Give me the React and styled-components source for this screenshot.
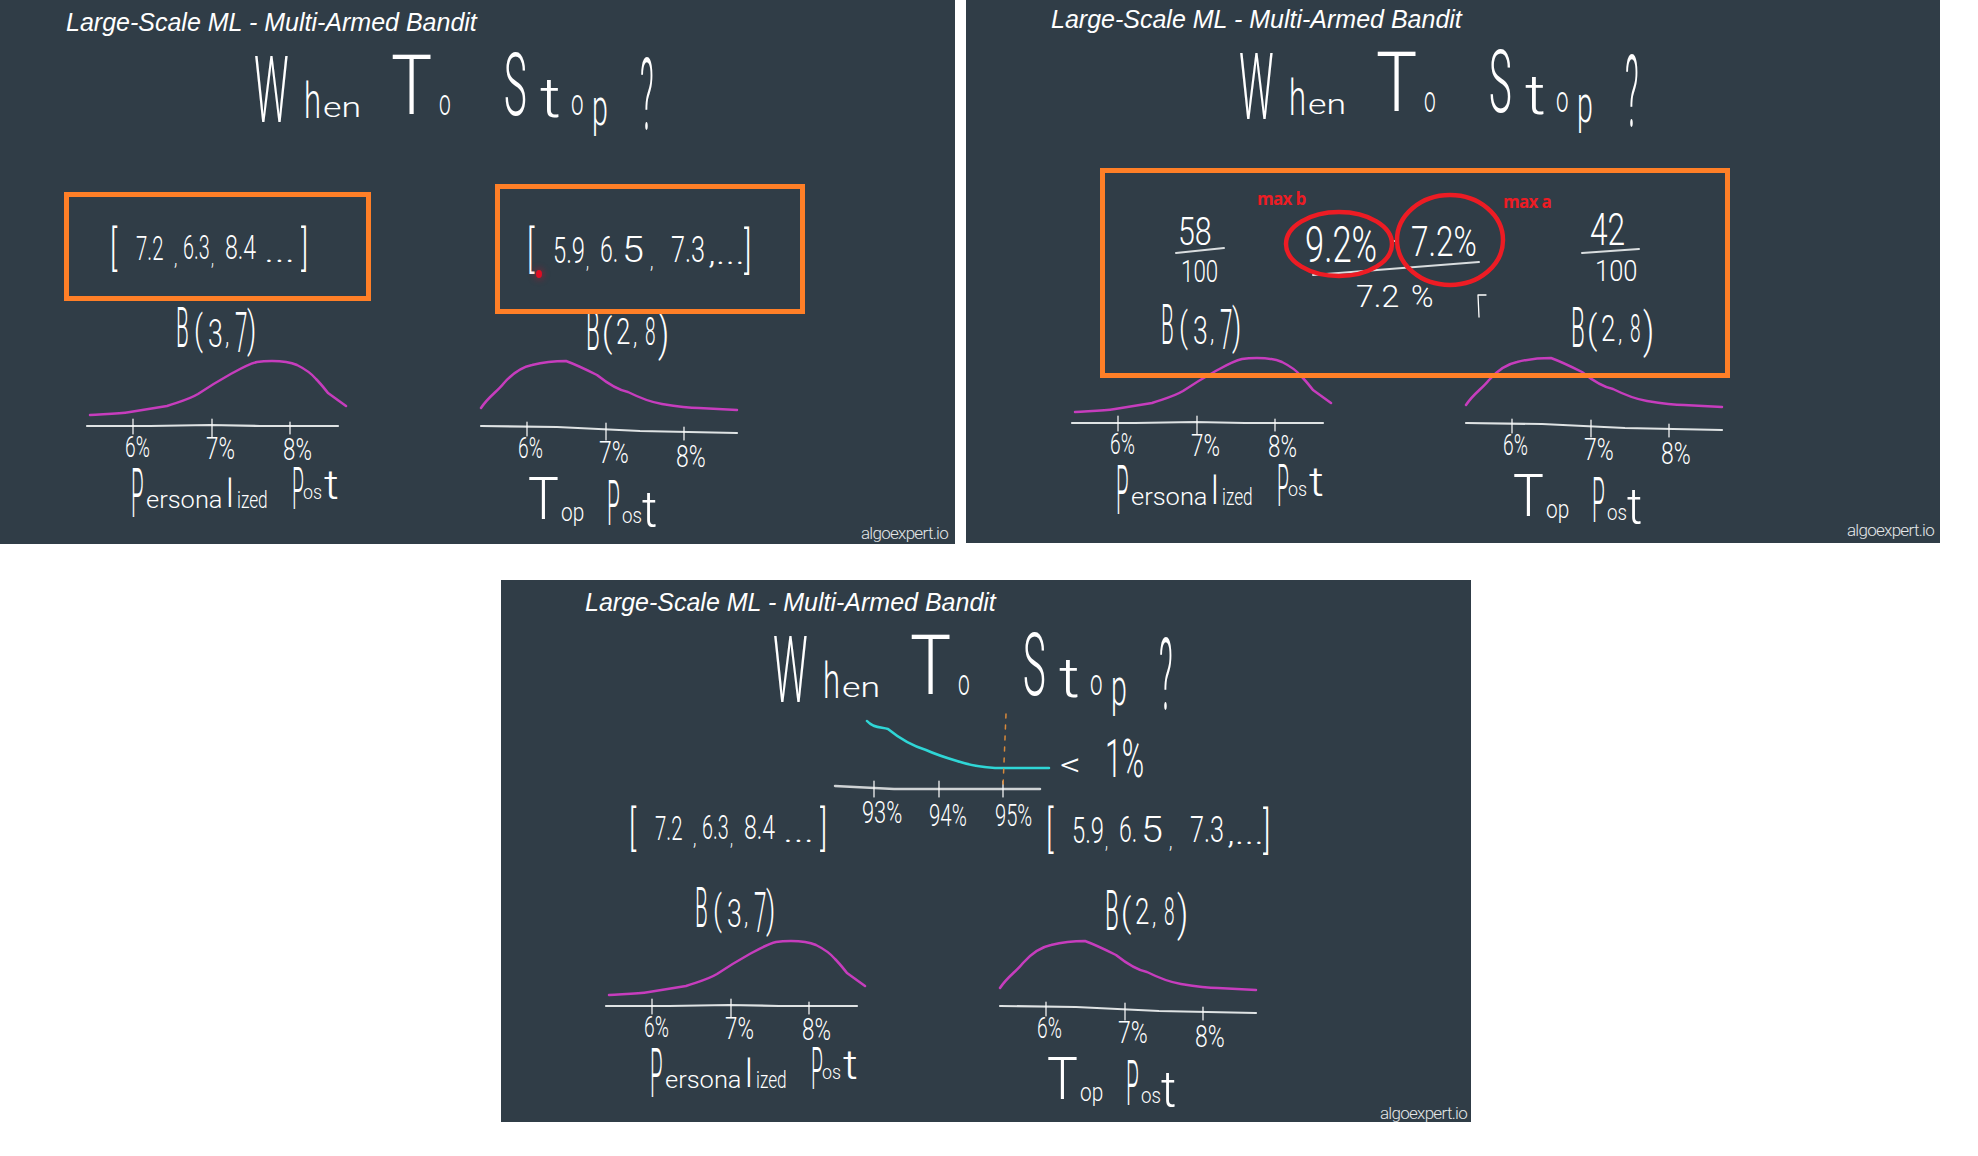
import React from 'react';
import styled, { createGlobalStyle } from 'styled-components';

const GlobalStyle = createGlobalStyle`
  html, body {
    margin: 0;
    padding: 0;
    background: #fff;
  }
`;

const Page = styled.div`
  width: 1978px;
  height: 1156px;
  display: flex;
  flex-direction: column;
  gap: 36px;
  overflow: hidden;
`;

const TopRow = styled.div`
  display: flex;
  gap: 11px;
`;

const BottomRow = styled.div`
  display: flex;
  padding-left: 501px;
`;

const Slide = styled.section`
  position: relative;
  flex: none;
  box-sizing: border-box;
  display: flex;
  flex-direction: column;
  justify-content: space-between;
  width: ${p => p.$w}px;
  height: ${p => p.$h}px;
  padding: ${p => p.$pad};
  background: #303d47;
  overflow: hidden;
`;

const Heading = styled.h2`
  margin: 0;
  font: italic 400 25px/26px 'Liberation Sans', Arial, sans-serif;
  white-space: nowrap;
  color: #fff;
`;

const Watermark = styled.span`
  align-self: flex-end;
  font: 300 17px/18px Roboto, sans-serif;
  letter-spacing: -0.7px;
  color: #e3e6e8;
`;

// the handwriting is a free drawing, placed in the coordinates of the first slide
const Canvas = styled.div`
  position: absolute;
  left: ${p => p.$dx || 0}px;
  top: ${p => p.$dy || 0}px;
  width: 1000px;
  height: 600px;
`;

const Ink = styled.span`
  position: absolute;
  left: ${p => p.$x}px;
  top: ${p => p.$base - 0.842 * p.$size}px;
  font-family: Roboto, 'Liberation Sans', sans-serif;
  font-size: ${p => p.$size}px;
  font-weight: 300;
  line-height: 1;
  white-space: pre;
  color: #fff;
  transform-origin: 0 84%;
  transform: scaleX(${p => p.$sx});
`;

const Note = styled.span`
  position: absolute;
  left: ${p => p.$x}px;
  top: ${p => p.$y}px;
  font: 700 17px/18px 'Open Sans', sans-serif;
  letter-spacing: -0.7px;
  color: #ed1c24;
`;

const Frame = styled.div`
  position: absolute;
  box-sizing: border-box;
  left: ${p => p.$x}px;
  top: ${p => p.$y}px;
  width: ${p => p.$w}px;
  height: ${p => p.$h}px;
  border: 5px solid #ff7f27;
`;

const Pointer = styled.i`
  position: absolute;
  left: ${p => p.$x - 3}px;
  top: ${p => p.$y - 4}px;
  width: 6px;
  height: 8px;
  border-radius: 50%;
  background: #e00d24;
  box-shadow: 0 0 6px 2px rgba(224, 13, 36, 0.35);
`;

const Sketch = styled.svg`
  position: absolute;
  left: 0;
  top: 0;
  width: 1000px;
  height: 600px;
  overflow: visible;
  fill: none;
  stroke-linecap: round;
  stroke-linejoin: round;
`;

const Marks = ({ items }) =>
  items.map(([x, base, size, sx, text], i) => (
    <Ink key={i} $x={x} $base={base} $size={size} $sx={sx}>
      {text}
    </Ink>
  ));

const TITLE = [
  [254, 122, 92, 0.42, 'W'],
  [304, 118, 50, 0.62, 'h'],
  [323, 118, 27, 1.32, 'en'],
  [391, 115, 84, 0.82, 'T'],
  [439, 115, 36, 0.58, 'o'],
  [504, 115, 87, 0.44, 'S'],
  [540, 117, 56, 1.15, 't'],
  [571, 115, 36, 0.62, 'o'],
  [592, 126, 52, 0.55, 'p'],
  [640, 130, 100, 0.3, '?'],
];

const LEFT_LABELS = [
  [176, 347, 56, 0.37, 'B'],
  [194, 345, 40, 0.7, '('],
  [208, 347, 38, 0.7, '3'],
  [225, 346, 28, 0.8, ','],
  [235, 352, 56, 0.4, '7'],
  [247, 346, 48, 0.6, ')'],
  [125, 457, 30, 0.64, '6%'],
  [206, 459, 31, 0.72, '7%'],
  [283, 460, 31, 0.72, '8%'],
  [131, 517, 68, 0.3, 'P'],
  [146, 508, 24, 1.06, 'ersona'],
  [226, 507, 38, 0.9, 'l'],
  [237, 508, 24, 0.72, 'ized'],
  [292, 510, 60, 0.32, 'P'],
  [303, 500, 21, 0.85, 'os'],
  [324, 500, 40, 1.15, 't'],
];

const RIGHT_LABELS = [
  [586, 350, 56, 0.4, 'B'],
  [602, 346, 38, 0.85, '('],
  [616, 344, 36, 0.72, '2'],
  [633, 346, 28, 0.8, ','],
  [645, 345, 38, 0.5, '8'],
  [658, 350, 48, 0.72, ')'],
  [518, 458, 30, 0.64, '6%'],
  [599, 463, 31, 0.74, '7%'],
  [676, 467, 31, 0.74, '8%'],
  [528, 520, 60, 0.86, 'T'],
  [561, 521, 26, 0.8, 'op'],
  [607, 525, 63, 0.33, 'P'],
  [622, 524, 22, 0.85, 'os'],
  [642, 527, 50, 0.95, 't'],
];

const ARRAYS = [
  [110, 265, 48, 0.62, '['],
  [136, 260, 34, 0.6, '7.2'],
  [174, 266, 22, 0.8, ','],
  [183, 259, 34, 0.58, '6.3'],
  [211, 266, 22, 0.7, ','],
  [225, 259, 34, 0.68, '8.4'],
  [264, 262, 30, 1.45, '...'],
  [301, 265, 48, 0.62, ']'],
  [527, 266, 50, 0.62, '['],
  [553, 263, 36, 0.66, '5.9'],
  [586, 269, 22, 0.7, ','],
  [600, 262, 36, 0.64, '6.'],
  [622, 262, 36, 1.1, '5'],
  [650, 269, 22, 0.8, ','],
  [671, 262, 36, 0.7, '7.3'],
  [708, 264, 30, 1.35, ',...'],
  [744, 267, 50, 0.62, ']'],
];

const SecondSlideMarks = [
  [212, 245, 38, 0.8, '58'],
  [215, 282, 31, 0.72, '100'],
  [624, 245, 44, 0.72, '42'],
  [629, 281, 30, 0.85, '100'],
  [339, 262, 50, 0.69, '9.2%'],
  [445, 256, 42, 0.75, '7.2%'],
  [390, 307, 32, 1, '7.2'],
  [445, 307, 32, 0.95, '%'],
];

const ThirdSlideMarks = [
  [361, 243, 32, 0.68, '93%'],
  [428, 246, 32, 0.64, '94%'],
  [494, 246, 32, 0.63, '95%'],
  [559, 196, 34, 1.2, '<'],
  [604, 197, 54, 0.56, '1%'],
];

// beta curves and their axes, same on every slide
const Curves = () => (
  <Sketch>
    <g stroke="#c63dbd" strokeWidth="2.5">
      <path d="M90 415 C105 414 118 414 130 412 C142 410 155 408 167 406 C178 402 188 400 198 394 C210 386 220 380 229 375 C240 369 248 364 257 362 C263 361 268 361 272 361 C282 361 290 362 297 365 C305 369 311 373 316 379 C321 384 324 388 328 393 L346 406" />
      <path d="M481 408 C489 396 497 392 504 383 C512 374 522 367 532 365 C544 362 555 361 566 361 C577 365 587 370 597 375 C607 383 618 390 628 392 C640 398 650 402 662 404 C674 406 686 408 699 408 L737 410" />
    </g>
    <g stroke="#dfe3e4" strokeWidth="2.2">
      <path d="M87 426 L150 426 L210 425 L260 426 L338 426" />
      <path d="M481 426 L557 427 L640 431 L737 433" />
    </g>
    <g stroke="#fff" strokeWidth="1.2">
      <path d="M133 419 V434 M212 419 V437 M290 422 V434" />
      <path d="M527 422 V436 M606 423 V440 M684 427 V440" />
    </g>
  </Sketch>
);

const Board = ({ children, dx, dy }) => (
  <Canvas $dx={dx} $dy={dy}>
    <Curves />
    <Marks items={TITLE} />
    <Marks items={LEFT_LABELS} />
    <Marks items={RIGHT_LABELS} />
    {children}
  </Canvas>
);

const App = () => (
  <>
    <GlobalStyle />
    <Page>
      <TopRow>
        <Slide $w={955} $h={544} $pad="9px 7px 2px 66px">
          <Heading>Large-Scale ML - Multi-Armed Bandit</Heading>
          <Watermark>algoexpert.io</Watermark>
          <Board>
            <Marks items={ARRAYS} />
            <Frame $x={64} $y={192} $w={307} $h={109} />
            <Frame $x={495} $y={184} $w={310} $h={130} />
            <Pointer $x={539} $y={274} />
          </Board>
        </Slide>
        <Slide $w={974} $h={543} $pad="6px 6px 4px 85px">
          <Heading>Large-Scale ML - Multi-Armed Bandit</Heading>
          <Watermark>algoexpert.io</Watermark>
          <Board dx={19} dy={-3} />
          <Canvas>
            <Sketch>
              <path d="M210 253 L258 248 M616 253 L673 249 M347 275 L513 262" stroke="#d9dddf" strokeWidth="2" />
              <path d="M426 241 H432 M513 317 L512 295 L520 295" stroke="#fff" strokeWidth="1.3" />
              <ellipse cx="373" cy="244" rx="53" ry="32" stroke="#ed1c24" strokeWidth="4.5" />
              <ellipse cx="484" cy="240" rx="53" ry="45" stroke="#ed1c24" strokeWidth="4.5" />
            </Sketch>
            <Marks items={SecondSlideMarks} />
            <Note $x={291} $y={190}>max b</Note>
            <Note $x={537} $y={193}>max a</Note>
            <Frame $x={134} $y={168} $w={630} $h={210} />
          </Canvas>
        </Slide>
      </TopRow>
      <BottomRow>
        <Slide $w={970} $h={542} $pad="9px 4px 0 84px">
          <Heading>Large-Scale ML - Multi-Armed Bandit</Heading>
          <Watermark>algoexpert.io</Watermark>
          <Board dx={18}>
            <Marks items={ARRAYS} />
          </Board>
          <Canvas>
            <Sketch>
              <path d="M366 141 C372 148 380 147 387 149 C398 158 412 166 425 170 C436 175 446 178 456 181 C468 185 480 187 494 188 L548 188" stroke="#2fd6d6" strokeWidth="2.5" />
              <path d="M334 206 L393 209 L539 209" stroke="#cfd3d5" strokeWidth="2.5" />
              <path d="M373 201 V217 M438 201 V217 M502 201 V217" stroke="#fff" strokeWidth="1.2" />
              <path d="M505 134 L502 207" stroke="#d8893a" strokeWidth="1.5" strokeDasharray="4 7" />
            </Sketch>
            <Marks items={ThirdSlideMarks} />
          </Canvas>
        </Slide>
      </BottomRow>
    </Page>
  </>
);

export default App;
